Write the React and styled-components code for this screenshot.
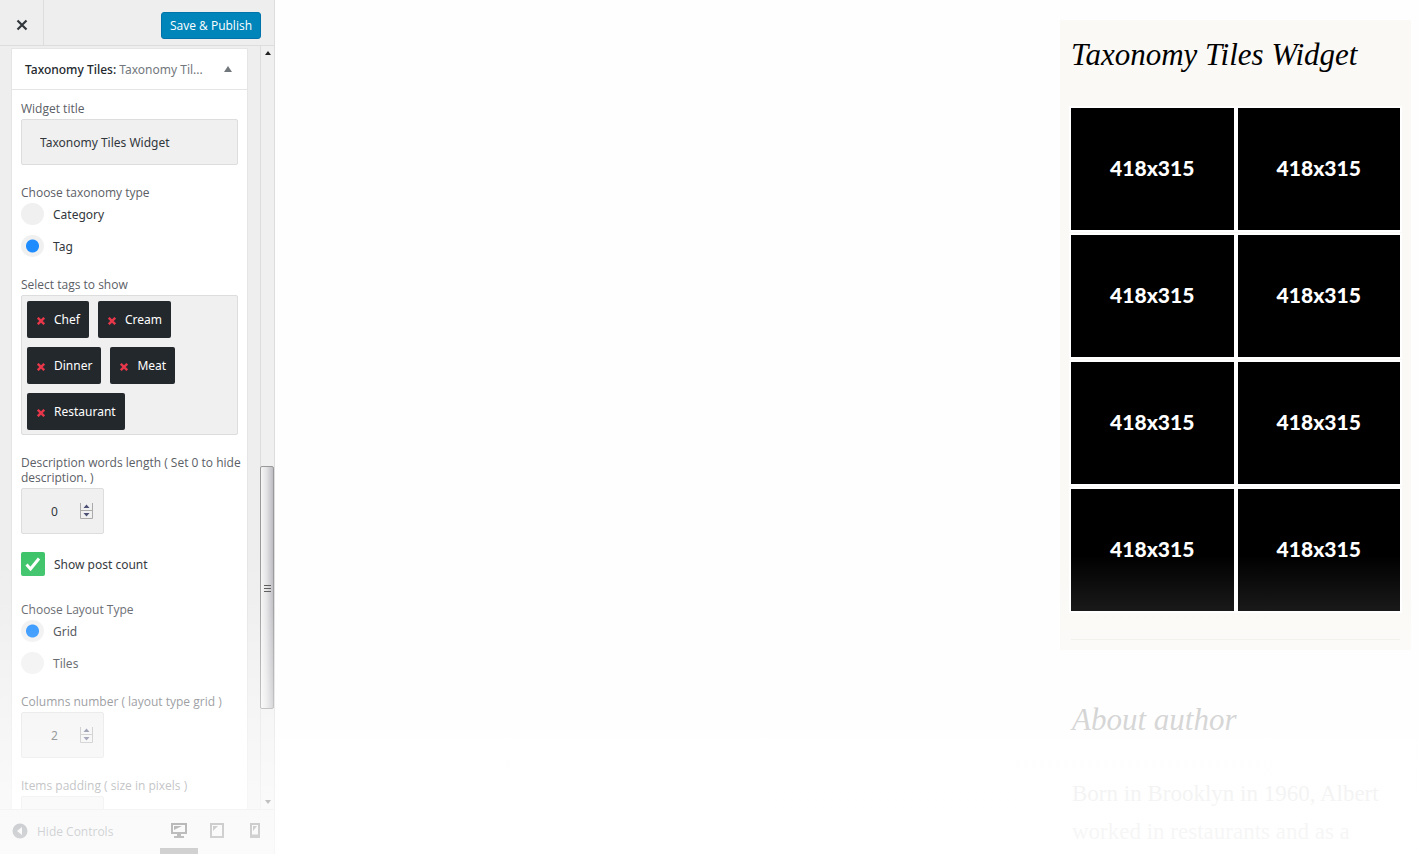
import React from "react";
import styled, { createGlobalStyle } from "styled-components";

const GlobalStyle = createGlobalStyle`
  *, *::before, *::after { box-sizing: border-box; }
  body {
    margin: 0;
    background: #fefefe;
    font-family: "Noto Sans", "Open Sans", sans-serif;
    font-size: 12px;
    color: #32373c;
  }
  button, input { font: inherit; color: inherit; }
`;

const Page = styled.div`
  position: relative;
  display: flex;
  height: 100vh;
  min-height: 480px;
  overflow: hidden;
`;

const Sidebar = styled.aside`
  flex: 0 0 275px;
  display: flex;
  flex-direction: column;
  background: #eee;
  border-right: 1px solid #ddd;
`;

const TopBar = styled.header`
  flex: 0 0 46px;
  display: flex;
  justify-content: space-between;
  align-items: center;
  padding-right: 13px;
  border-bottom: 1px solid #ddd;
`;

const CloseButton = styled.button`
  width: 44px;
  align-self: stretch;
  display: grid;
  place-items: center;
  padding: 4px 0 0;
  border: 0;
  border-right: 1px solid #ddd;
  background: none;
  color: #32373c;
`;

const SaveButton = styled.button`
  height: 27px;
  margin-top: 6px;
  padding: 1px 8px 0;
  border: 1px solid #0073aa;
  border-radius: 3px;
  background: #0085ba;
  color: #fff;
  font-family: "Open Sans", sans-serif;
  line-height: 24px;
  white-space: nowrap;
`;

const Body = styled.div`
  flex: 1;
  min-height: 0;
  display: flex;
  justify-content: space-between;
`;

const Panel = styled.section`
  width: 237px;
  margin: 2px 0 0 11px;
  overflow: hidden;
  background: #fff;
  border: 1px solid #e5e5e5;
  border-bottom: 0;
`;

const PanelHeader = styled.button`
  display: flex;
  align-items: center;
  justify-content: space-between;
  width: 100%;
  height: 41px;
  padding: 0 15px 0 13px;
  border: 0;
  border-bottom: 1px solid #e5e5e5;
  background: none;
  color: #23282d;
  text-align: left;
`;

const PanelTitle = styled.span`
  white-space: nowrap;
  font-weight: 500;
  span { font-weight: 400; color: #72777c; }
`;

const Form = styled.form`
  display: flex;
  flex-direction: column;
  gap: 20px;
  padding: 11px 9px 0;
`;

const Field = styled.div`
  display: flex;
  flex-direction: column;
  align-items: stretch;
  gap: 3px;
`;

const Group = styled.fieldset`
  margin: 0;
  padding: 0;
  border: 0;
  min-width: 0;
`;

const labelText = `
  display: block;
  padding: 0;
  font-family: "Open Sans", sans-serif;
  font-size: 12px;
  line-height: 15px;
  color: #5b6066;
`;
const Label = styled.label`${labelText} margin-right: -8px;`;
const Legend = styled.legend`${labelText} margin-bottom: 3px;`;

const TextInput = styled.input`
  width: 100%;
  height: 46px;
  padding: 0 18px;
  border: 1px solid #ddd;
  border-radius: 2px;
  background: #f0f0f0;
  outline: none;
`;

const NumberBox = styled.div`
  display: flex;
  align-items: center;
  width: 83px;
  height: 46px;
  padding-right: 10px;
  border: 1px solid #ddd;
  border-radius: 2px;
  background: #f0f0f0;
`;

const NumberInput = styled.input`
  flex: 1;
  min-width: 0;
  padding: 0 0 0 29px;
  border: 0;
  background: none;
  outline: none;
  appearance: textfield;
  &::-webkit-inner-spin-button { appearance: none; margin: 0; }
`;

const RadioList = styled.div`
  display: flex;
  flex-direction: column;
  gap: 10px;
`;

const ChoiceLabel = styled.label`
  display: flex;
  align-items: center;
  gap: 9px;
  min-height: 22px;
`;

const Radio = styled.input`
  appearance: none;
  width: 23px;
  height: 22px;
  margin: 0;
  border-radius: 50%;
  background: #f0f0f0;
  &:checked { background: radial-gradient(circle, #1e8cff 6px, #f0f0f0 7px); }
`;

const CheckRow = styled(ChoiceLabel)`
  margin-top: -2px;
  padding-bottom: 6px;
`;

const CheckMark = styled.span`
  display: grid;
  place-items: center;
  & > * { grid-area: 1 / 1; }
  svg { pointer-events: none; }
`;

const CheckBox = styled.input`
  appearance: none;
  width: 24px;
  height: 24px;
  margin: 0;
  border-radius: 2px;
  background: #3fc46b;
`;

const TagBox = styled.div`
  display: flex;
  flex-wrap: wrap;
  align-content: flex-start;
  gap: 9px;
  padding: 5px 5px 4px;
  border: 1px solid #ddd;
  border-radius: 2px;
  background: #f0f0f0;
`;

const Tag = styled.span`
  display: flex;
  align-items: center;
  gap: 9px;
  height: 37px;
  padding: 0 9px 0 10px;
  border-radius: 2px;
  background: #23282d;
  color: #fff;
`;

const RemoveTag = styled.button`
  display: flex;
  padding: 2px 0 0;
  border: 0;
  background: none;
  color: #e8374a;
`;

const ScrollTrack = styled.div`
  width: 14px;
  display: flex;
  flex-direction: column;
  align-items: center;
  padding: 5px 0;
  border-left: 1px solid #ddd;
  background: #f0f0f0;
`;

const ScrollSpace = styled.div`
  flex: ${(p) => p.$grow} 1 0;
`;

const ScrollThumb = styled.div`
  flex: 241 1 0;
  display: grid;
  place-items: center;
  width: 14px;
  margin-left: -1px;
  border: 1px solid #999;
  border-radius: 2px;
  background: linear-gradient(90deg, #f6f6f6, #e4e4e6 45%, #bcbcc2);
`;

const BottomBar = styled.footer`
  flex: 0 0 45px;
  display: flex;
  justify-content: space-between;
  border-top: 1px solid #ddd;
  padding: 0 0 0 12px;
  color: #555d66;
`;

const HideButton = styled.button`
  display: flex;
  align-items: center;
  gap: 9px;
  padding: 0 0 2px;
  border: 0;
  background: none;
  font-family: "Open Sans", sans-serif;
`;

const Devices = styled.div`
  display: flex;
`;

const DeviceButton = styled.button`
  display: grid;
  place-items: center;
  width: 38px;
  padding: 3px 0 0;
  border: 0;
  border-bottom: 6px solid ${(p) => (p.$active ? "#444" : "transparent")};
  background: none;
  color: ${(p) => (p.$active ? "#111" : "#555")};
`;

const Preview = styled.main`
  flex: 1;
  min-width: 0;
  display: flex;
  justify-content: flex-end;
  padding: 20px 8px 0 20px;
  font-family: "Liberation Serif", serif;
`;

const WidgetColumn = styled.div`
  width: 351px;
`;

const Card = styled.section`
  padding: 12px 11px 10px;
  background: #faf9f6;
`;

const Heading = styled.h2`
  margin: 0;
  font-size: 31px;
  font-style: italic;
  font-weight: 400;
  line-height: 46px;
  color: ${(p) => (p.$faded ? "#b4b4b4" : "#000")};
`;

const Tiles = styled.div`
  display: grid;
  grid-template-columns: 1fr 1fr;
  gap: 5px 4px;
  margin-top: 30px;
  padding-bottom: 28px;
  border-bottom: 1px solid #eeedea;
`;

const Tile = styled.a`
  display: grid;
  place-items: center;
  height: 122px;
  padding-bottom: 4px;
  background: #000;
  box-shadow: 0 0 0 2px #fff;
  color: #fff;
  font-family: Lato, sans-serif;
  font-size: 21px;
  font-weight: 900;
  text-decoration: none;
`;

const About = styled.section`
  padding: 47px 12px 0;
`;

const Bio = styled.p`
  margin: 32px 0 0;
  font-size: 23px;
  line-height: 38px;
  color: #dedede;
`;

const FadeOut = styled.div`
  position: absolute;
  inset: 65% 0 0;
  pointer-events: none;
  background: linear-gradient(
    rgba(255, 255, 255, 0),
    rgba(255, 255, 255, 0.1) 19%,
    rgba(255, 255, 255, 0.2) 28%,
    rgba(255, 255, 255, 0.4) 49%,
    rgba(255, 255, 255, 0.64) 78%,
    rgba(255, 255, 255, 0.76)
  );
`;

const Cross = ({ size, stroke }) => (
  <svg width={size} height={size} viewBox="0 0 10 10" aria-hidden="true">
    <path d="M1 1l8 8M9 1L1 9" stroke="currentColor" strokeWidth={stroke} fill="none" />
  </svg>
);

const Arrow = ({ width, height, down, color }) => (
  <svg width={width} height={height} viewBox="0 0 8 6" preserveAspectRatio="none" aria-hidden="true">
    <path d={down ? "M0 0h8L4 6z" : "M0 6h8L4 0z"} fill={color} />
  </svg>
);

const Spinner = () => (
  <svg width="13" height="16" viewBox="0 0 13 16" aria-hidden="true">
    <path d="M.5 0v15.5h12V0M0 7.5h13" fill="none" stroke="#aaa" />
    <path d="M3.5 5h6l-3-3.5zM3.5 10h6l-3 3.5z" fill="#4c5277" />
  </svg>
);

const NumberField = ({ id, label, value }) => (
  <Field>
    <Label htmlFor={id}>{label}</Label>
    <NumberBox>
      <NumberInput id={id} type="number" defaultValue={value} />
      <Spinner />
    </NumberBox>
  </Field>
);

const RadioGroup = ({ name, legend, options, selected }) => (
  <Group>
    <Legend>{legend}</Legend>
    <RadioList>
      {options.map((option) => (
        <ChoiceLabel key={option}>
          <Radio type="radio" name={name} defaultChecked={option === selected} />
          {option}
        </ChoiceLabel>
      ))}
    </RadioList>
  </Group>
);

const tags = ["Chef", "Cream", "Dinner", "Meat", "Restaurant"];
const tiles = Array.from({ length: 8 }, (_, i) => i);

export default function App() {
  return (
    <Page>
      <GlobalStyle />
      <Sidebar>
        <TopBar>
          <CloseButton type="button" aria-label="Close">
            <svg width="12" height="12" viewBox="0 0 12 12" aria-hidden="true">
              <path d="M1.5 1.5l9 9M10.5 1.5l-9 9" stroke="currentColor" strokeWidth="2.2" />
            </svg>
          </CloseButton>
          <SaveButton type="button">Save &amp; Publish</SaveButton>
        </TopBar>
        <Body>
          <Panel>
            <PanelHeader type="button">
              <PanelTitle>
                Taxonomy Tiles: <span>Taxonomy Til...</span>
              </PanelTitle>
              <Arrow width={8} height={6} color="#72777c" />
            </PanelHeader>
            <Form>
              <Field>
                <Label htmlFor="title">Widget title</Label>
                <TextInput id="title" type="text" defaultValue="Taxonomy Tiles Widget" />
              </Field>
              <RadioGroup
                name="taxonomy"
                legend="Choose taxonomy type"
                options={["Category", "Tag"]}
                selected="Tag"
              />
              <Group>
                <Legend>Select tags to show</Legend>
                <TagBox>
                  {tags.map((tag) => (
                    <Tag key={tag}>
                      <RemoveTag type="button" aria-label={`Remove ${tag}`}>
                        <Cross size={8} stroke={3} />
                      </RemoveTag>
                      {tag}
                    </Tag>
                  ))}
                </TagBox>
              </Group>
              <NumberField
                id="words"
                label="Description words length ( Set 0 to hide description. )"
                value={0}
              />
              <CheckRow>
                <CheckMark>
                  <CheckBox type="checkbox" defaultChecked />
                  <svg width="16" height="14" viewBox="0 0 16 14" aria-hidden="true">
                    <path d="M1.5 7.5l4 4.5L14 1.5" fill="none" stroke="#fff" strokeWidth="3" />
                  </svg>
                </CheckMark>
                Show post count
              </CheckRow>
              <RadioGroup
                name="layout"
                legend="Choose Layout Type"
                options={["Grid", "Tiles"]}
                selected="Grid"
              />
              <NumberField id="columns" label="Columns number ( layout type grid )" value={2} />
              <NumberField id="padding" label="Items padding ( size in pixels )" value={4} />
            </Form>
          </Panel>
          <ScrollTrack>
            <Arrow width={6} height={4} color="#222" />
            <ScrollSpace $grow={412} />
            <ScrollThumb>
              <svg width="7" height="8" viewBox="0 0 7 8" aria-hidden="true">
                <path d="M0 1.5h7M0 4.5h7M0 7.5h7" stroke="#555" />
              </svg>
            </ScrollThumb>
            <ScrollSpace $grow={91} />
            <Arrow width={6} height={4} color="#444" down />
          </ScrollTrack>
        </Body>
        <BottomBar>
          <HideButton type="button">
            <svg width="16" height="16" viewBox="0 0 16 16" aria-hidden="true">
              <circle cx="8" cy="8" r="7.5" fill="currentColor" />
              <path d="M10 4v8L5 8z" fill="#eee" />
            </svg>
            Hide Controls
          </HideButton>
          <Devices>
            <DeviceButton type="button" $active aria-label="Desktop preview">
              <svg width="16" height="15" viewBox="0 0 16 15" aria-hidden="true">
                <path d="M1 1h14v9H1z" fill="none" stroke="currentColor" strokeWidth="2" />
                <path d="M6 10h4v3h3v2H3v-2h3z" fill="currentColor" />
                <path d="M3 3h8L3 7z" fill="currentColor" />
              </svg>
            </DeviceButton>
            <DeviceButton type="button" aria-label="Tablet preview">
              <svg width="14" height="15" viewBox="0 0 14 15" aria-hidden="true">
                <path d="M1 1h12v13H1z" fill="none" stroke="currentColor" strokeWidth="2" />
                <path d="M3 3h5L3 8z" fill="currentColor" />
              </svg>
            </DeviceButton>
            <DeviceButton type="button" aria-label="Mobile preview">
              <svg width="10" height="15" viewBox="0 0 10 15" aria-hidden="true">
                <path d="M1 1h8v13H1zM1 12.5h8" fill="none" stroke="currentColor" strokeWidth="2" />
                <path d="M3 3h4L3 8z" fill="currentColor" />
              </svg>
            </DeviceButton>
          </Devices>
        </BottomBar>
      </Sidebar>
      <Preview>
        <WidgetColumn>
          <Card>
            <Heading>Taxonomy Tiles Widget</Heading>
            <Tiles>
              {tiles.map((i) => (
                <Tile key={i} href="#">418x315</Tile>
              ))}
            </Tiles>
          </Card>
          <About>
            <Heading $faded>About author</Heading>
            <Bio>Born in Brooklyn in 1960, Albert worked in restaurants and as a</Bio>
          </About>
        </WidgetColumn>
      </Preview>
      <FadeOut />
    </Page>
  );
}
